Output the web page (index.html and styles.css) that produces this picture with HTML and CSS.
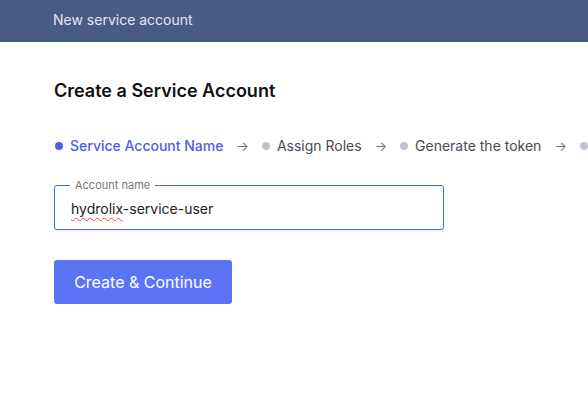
FILE: index.html
```html
<!DOCTYPE html>
<html lang="en">
<head>
    <meta charset="UTF-8">
    <meta name="viewport" content="width=device-width, initial-scale=1.0">
    <title>New service account</title>
    <link rel="stylesheet" href="styles.css">
</head>
<body>
    <div class="topbar">New service account</div>

    <div class="content">
        <h1 class="title">Create a Service Account</h1>

        <div class="steps">
            <div class="step active"><span class="dot"></span>Service Account Name</div>
            <span class="arrow">&rarr;</span>
            <div class="step"><span class="dot"></span>Assign Roles</div>
            <span class="arrow">&rarr;</span>
            <div class="step"><span class="dot"></span>Generate the token</div>
            <span class="arrow">&rarr;</span>
            <div class="step"><span class="dot"></span></div>
        </div>

        <fieldset class="field">
            <legend>Account name</legend>
            <div class="value"><span class="typo">hydrolix</span>-service-user</div>
        </fieldset>

        <button class="button">Create &amp; Continue</button>
    </div>
</body>
</html>
```

FILE: styles.css
```css
body {
    margin: 0;
    background-color: white;
    font-family: Inter, "Noto Sans", sans-serif;
    overflow: hidden;
    width: 588px;
    height: 393px;
}

.topbar {
    height: 42px;
    background-color: #485b83;
    color: #e3e7f0;
    font-size: 14px;
    line-height: 40px;
    padding-left: 53px;
    box-sizing: border-box;
}

.content {
    padding-left: 54px;
}

.title {
    margin: 0;
    padding-top: 38px;
    font-size: 18px;
    font-weight: 600;
    line-height: 22px;
    color: #111;
}

.steps {
    display: flex;
    align-items: center;
    margin-top: 35px;
    font-size: 14px;
    line-height: 18px;
    color: #4a4a52;
    white-space: nowrap;
}

.step {
    display: flex;
    align-items: center;
}

.dot {
    width: 8px;
    height: 8px;
    border-radius: 50%;
    background-color: #c2c2cc;
    margin-left: 1px;
    margin-right: 7px;
}

.step.active {
    color: #4d5ee6;
    font-weight: 500;
}

.step.active .dot {
    background-color: #4d5ee6;
}

.arrow {
    color: #707078;
    font-size: 13px;
    margin: 0 12px 0 13px;
}

.field {
    margin: 25px 0 0 0;
    width: 390px;
    height: 50px;
    box-sizing: border-box;
    border: 1px solid #3d6fe0;
    border-radius: 3px;
    padding: 0 16px;
    box-shadow: 0 1px 3px rgba(0, 0, 0, 0.08);
}

.field legend {
    font-size: 11px;
    color: #777;
    padding: 0 5px;
    margin-left: -1px;
    line-height: 10px;
}

.value {
    font-size: 14px;
    color: #222;
    line-height: 20px;
    margin-top: 9px;
}

.typo {
    text-decoration: underline wavy #e05050;
    text-decoration-thickness: 1px;
    text-underline-offset: 3px;
    text-decoration-skip-ink: none;
}

.button {
    display: block;
    margin-top: 30px;
    width: 178px;
    height: 44px;
    background-color: #5b74f7;
    color: white;
    border: none;
    border-radius: 3px;
    font-family: Inter, "Noto Sans", sans-serif;
    font-size: 16px;
    cursor: pointer;
}
```
